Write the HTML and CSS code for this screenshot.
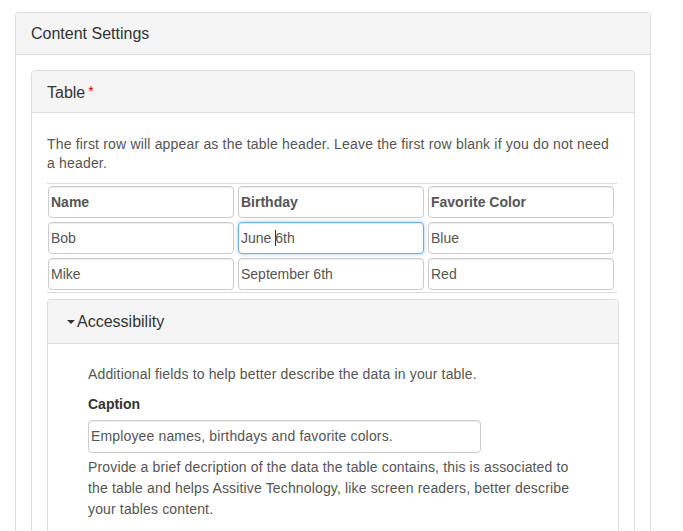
FILE: index.html
```html
<!DOCTYPE html>
<html>
<head>
<meta charset="utf-8">
<link rel="stylesheet" href="styles.css">
</head>
<body>
<div class="panel outer">
  <div class="panel-heading">Content Settings</div>
  <div class="panel-body outer-body">
    <div class="panel inner">
      <div class="panel-heading">Table<span class="req">*</span></div>
      <div class="panel-body table-body">
        <p class="intro">The first row will appear as the table header. Leave the first row blank if you do not need a header.</p>
        <div class="grid">
          <div class="cell head">Name</div>
          <div class="cell head">Birthday</div>
          <div class="cell head">Favorite Color</div>
          <div class="cell">Bob</div>
          <div class="cell focus">June <span class="caret"></span>6th</div>
          <div class="cell">Blue</div>
          <div class="cell">Mike</div>
          <div class="cell">September 6th</div>
          <div class="cell">Red</div>
        </div>
        <div class="panel acc">
          <div class="panel-heading acc-heading"><span class="tri"></span>Accessibility</div>
          <div class="acc-body">
            <p class="acc-intro">Additional fields to help better describe the data in your table.</p>
            <div class="label">Caption</div>
            <div class="cell caption">Employee names, birthdays and favorite colors.</div>
            <p class="help">Provide a brief decription of the data the table contains, this is associated to the table and helps Assitive Technology, like screen readers, better describe your tables content.</p>
          </div>
        </div>
      </div>
    </div>
  </div>
</div>
</body>
</html>
```
FILE: styles.css
```css
* { box-sizing: border-box; }
html, body { margin: 0; background: #fff; }
body {
  padding: 12px 0 0 15px;
  font-family: "Liberation Sans", Arial, sans-serif;
  font-size: 14px;
  color: #555;
  height: 531px;
  overflow: hidden;
}
p { margin: 0; }
.panel {
  border: 1px solid #ddd;
  border-radius: 4px;
  background: #fff;
}
.outer { width: 636px; height: 600px; }
.panel-heading {
  background: #f5f5f5;
  border-bottom: 1px solid #ddd;
  border-radius: 3px 3px 0 0;
  color: #333;
  font-size: 16px;
  height: 42px;
  line-height: 41px;
  padding: 0 15px;
}
.outer-body { padding: 15px; }
.inner { height: 600px; }
.req { color: #e00; font-size: 14px; margin-left: 3px; vertical-align: 2px; }
.table-body { padding: 22px 15px 15px; }
.intro { line-height: 19px; width: 570px; margin-bottom: 10px; letter-spacing: 0.18px; }
.grid {
  width: 570px;
  border-top: 1px solid #ddd;
  border-bottom: 1px solid #ddd;
  display: grid;
  grid-template-columns: 186px 186px 186px;
  column-gap: 4px;
  row-gap: 4px;
  padding: 2px 1px 2px 1px;
}
.cell {
  height: 32px;
  border: 1px solid #ccc;
  border-radius: 4px;
  box-shadow: inset 0 1px 1px rgba(0,0,0,0.075);
  padding: 0 2px;
  line-height: 30px;
  color: #555;
  white-space: nowrap;
  background: #fff;
}
.cell.head { font-weight: bold; }
.cell.focus {
  border-color: #66afe9;
  box-shadow: inset 0 1px 1px rgba(0,0,0,0.075), 0 0 4px rgba(102,175,233,0.6);
}
.caret {
  display: inline-block;
  width: 1px;
  height: 16px;
  background: #333;
  vertical-align: -3px;
  margin-right: -1px;
}
.acc { margin-top: 6px; width: 572px; height: 300px; }
.acc-heading { padding-left: 19px; height: 44px; line-height: 43px; }
.tri {
  display: inline-block;
  width: 0; height: 0;
  border-left: 4px solid transparent;
  border-right: 4px solid transparent;
  border-top: 4px solid #333;
  vertical-align: 3px;
  margin-right: 2px;
}
.acc-body { padding: 20px 40px; letter-spacing: 0.15px; }
.acc-intro { line-height: 20px; margin-bottom: 10px; }
.label { font-weight: bold; color: #333; line-height: 20px; margin-bottom: 6px; letter-spacing: 0; }
.cell.caption { width: 393px; height: 33px; line-height: 31px; }
.help { width: 490px; line-height: 21px; margin-top: 4px; }
```
